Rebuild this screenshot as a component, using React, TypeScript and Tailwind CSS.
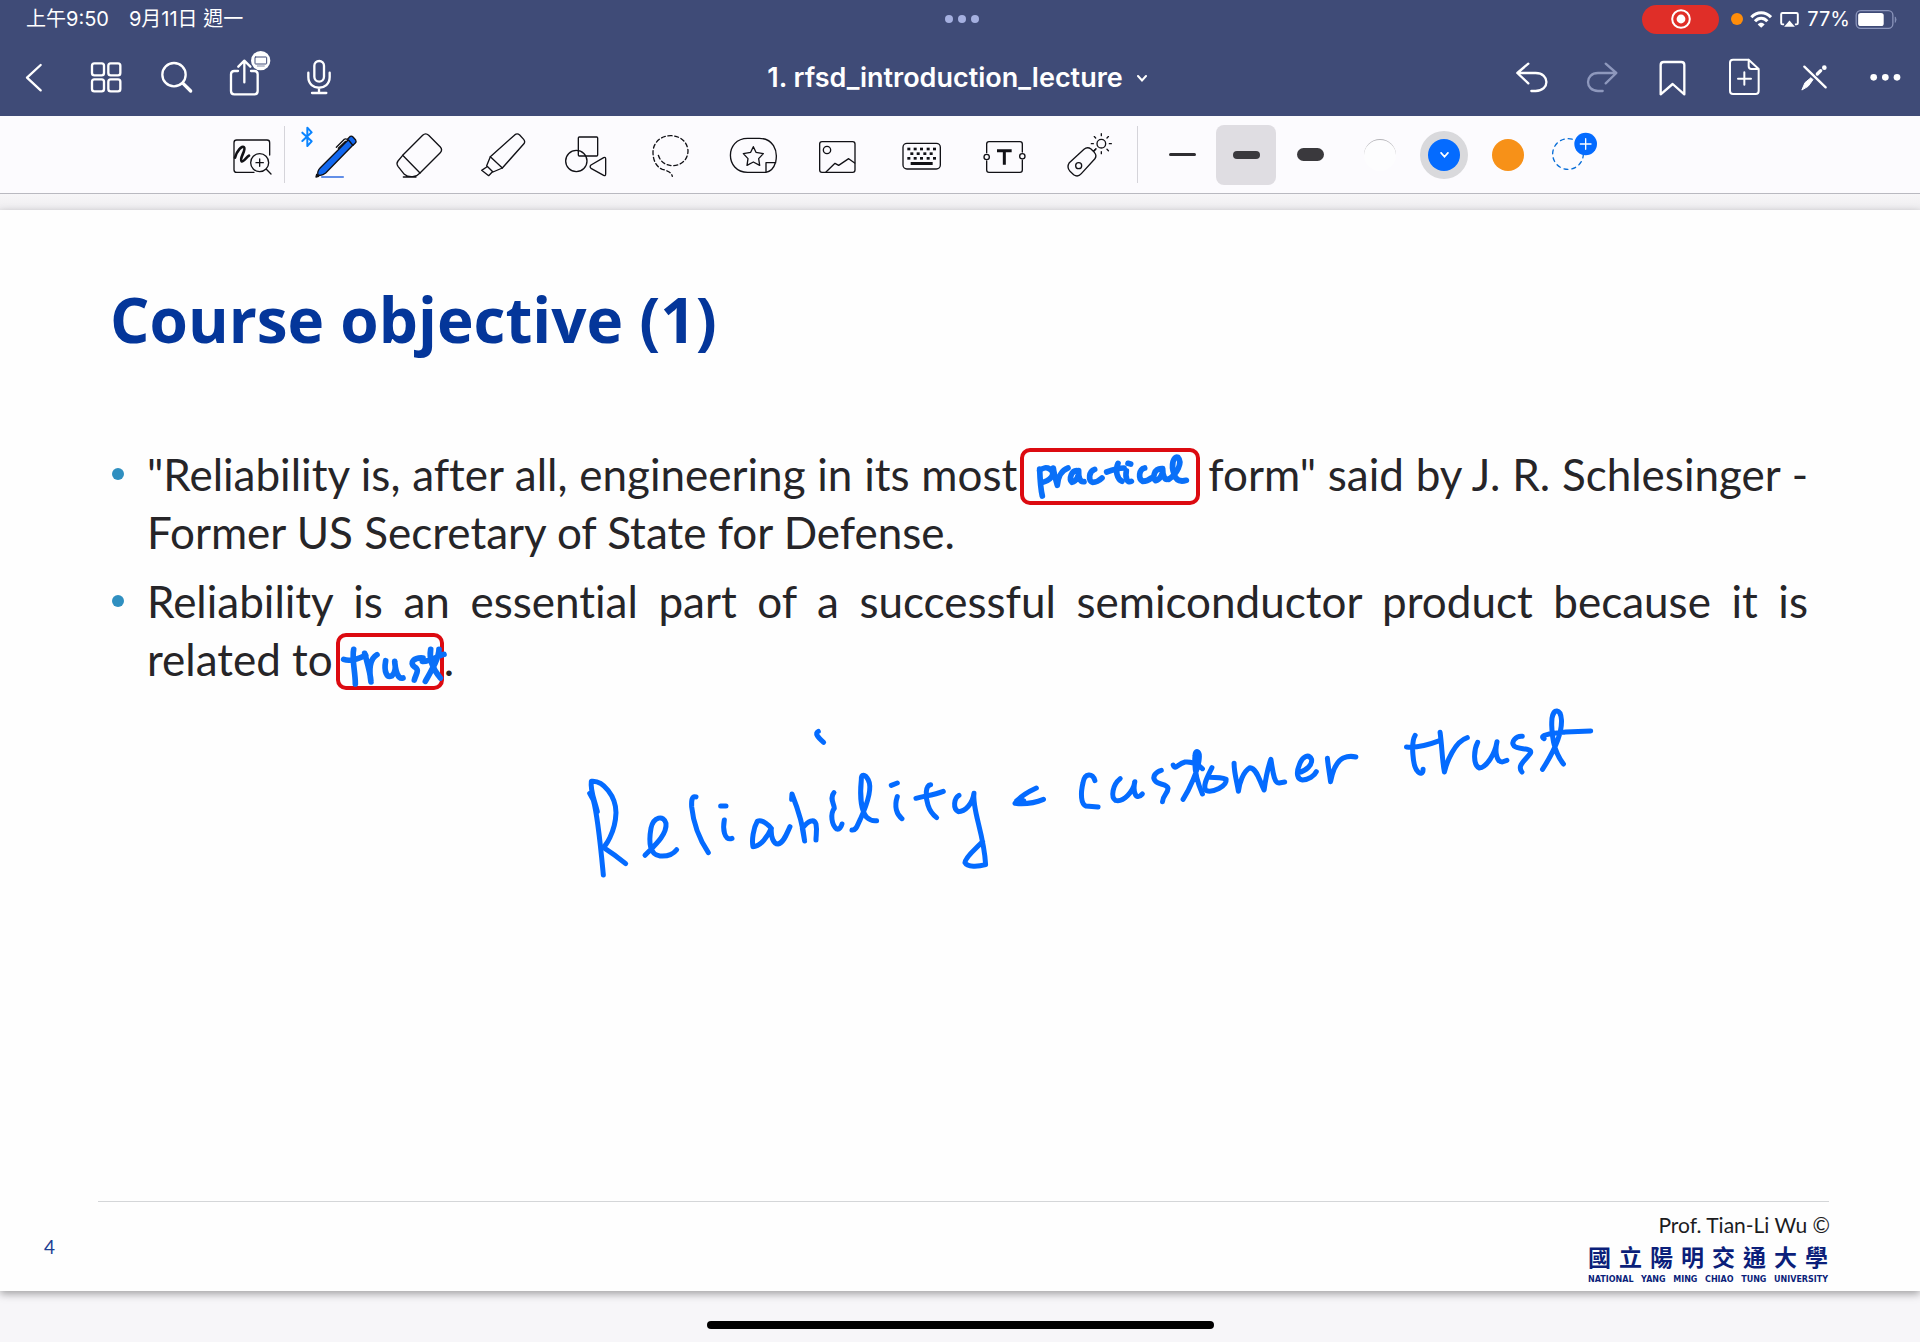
import type { ReactNode } from "react";

type IconProps = { box: string; children: ReactNode; w?: number };

/* 60px glyph drawn on a grid of three units per pixel */
function Glyph({ box, children, w = 4 }: IconProps) {
  return (
    <svg
      viewBox={box}
      className="size-[60px] shrink-0 overflow-visible"
      fill="none"
      stroke="currentColor"
      strokeWidth={w}
      strokeLinecap="round"
      strokeLinejoin="round"
      aria-hidden="true"
    >
      {children}
    </svg>
  );
}

function NavButton({ label, box, children, dim = false }: IconProps & { label: string; dim?: boolean }) {
  return (
    <button
      type="button"
      aria-label={label}
      className={dim ? "flex w-[71px] items-center justify-center text-[#8e98bd]" : "flex w-[71px] items-center justify-center text-white"}
    >
      <Glyph box={box} w={7}>
        {children}
      </Glyph>
    </button>
  );
}

function Tool({ label, box, children }: IconProps & { label: string }) {
  return (
    <button type="button" aria-label={label} className="flex w-[84px] items-center justify-center text-[#111116]">
      <Glyph box={box}>{children}</Glyph>
    </button>
  );
}

function StatusBar() {
  return (
    <div className="grid h-[38px] grid-cols-3 items-center pr-[22px] pl-[26px]">
      <div className="flex gap-5 text-[20px] leading-6">
        <span>上午9:50</span>
        <span>9月11日 週一</span>
      </div>
      <div className="flex justify-center gap-[5px]">
        <span className="size-2 rounded-full bg-[#a5b0e0]" />
        <span className="size-2 rounded-full bg-[#a5b0e0]" />
        <span className="size-2 rounded-full bg-[#a5b0e0]" />
      </div>
      <div className="flex items-center justify-end">
        <span className="mr-3 flex h-[29px] w-[77px] items-center justify-center rounded-full bg-[#e02e28]">
          <svg viewBox="0 0 20 20" className="size-5" aria-hidden="true">
            <circle cx="10" cy="10" r="8.8" fill="none" stroke="#fff" strokeWidth="2" />
            <circle cx="10" cy="10" r="4.4" fill="#fff" />
          </svg>
        </span>
        <span className="mr-[7px] size-3 rounded-full bg-[#ff8d0a]" />
        <svg viewBox="934 32 66 50" className="mr-2 h-[17px] w-[22px]" fill="none" stroke="#fff" strokeWidth="9" aria-hidden="true">
          <path d="M938 50 C955 32 980 32 997 50 M949 62 C960 50 975 50 986 62" />
          <path d="M957 72 C963 65 972 65 978 72 L967.500 82 Z" fill="#fff" stroke="none" />
        </svg>
        <svg viewBox="1024 36 57 46" className="mr-2 h-[15px] w-[19px]" fill="none" stroke="#fff" strokeWidth="6" aria-hidden="true">
          <path d="M1036 74 H1031 Q1027 74 1027 70 V43 Q1027 39 1031 39 H1074 Q1078 39 1078 43 V70 Q1078 74 1074 74 H1069" />
          <path d="M1036 81 L1052.500 62 L1069 81 Z" fill="#fff" stroke="none" />
        </svg>
        <span className="mr-[5px] text-[20px] leading-6">77%</span>
        <svg viewBox="1240 29 128 58" className="h-[19px] w-[43px]" aria-hidden="true">
          <rect x="1242" y="31" width="112" height="54" rx="14" fill="none" stroke="#8b95bb" strokeWidth="4" />
          <rect x="1248" y="38" width="78" height="40" rx="8" fill="#fff" />
          <path d="M1361 50 q6 8 0 17 z" fill="#8b95bb" stroke="#8b95bb" strokeWidth="2" />
        </svg>
      </div>
    </div>
  );
}

function NavBar() {
  return (
    <div className="grid h-[78px] grid-cols-[1fr_auto_1fr] items-center">
      <div className="flex">
        <NavButton label="Back" box="18 141 180 180">
          <path d="M122 195 L81 233 L122 271" />
        </NavButton>
        <NavButton label="Thumbnails" box="231 141 180 180">
          <rect x="276" y="190" width="36" height="36" rx="7" />
          <rect x="325" y="190" width="36" height="36" rx="7" />
          <rect x="276" y="238" width="36" height="36" rx="7" />
          <rect x="325" y="238" width="36" height="36" rx="7" />
        </NavButton>
        <NavButton label="Search" box="444 141 180 180">
          <circle cx="522" cy="224" r="35" />
          <path d="M549 250 L572 273" strokeWidth="10" />
        </NavButton>
        <NavButton label="Share" box="657 141 180 180">
          <path d="M714 213 H703 Q693 213 693 223 V273 Q693 283 703 283 H763 Q773 283 773 273 V223 Q773 213 763 213 H753 M733 247 V183 M715 200 L733 182 L751 200" />
          <circle cx="782" cy="182" r="29" fill="#fff" stroke="none" />
          <rect x="765" y="171" width="35" height="21" rx="2" stroke="#3f4b77" strokeWidth="3" />
          <path d="M772 198 H793" stroke="#3f4b77" strokeWidth="2" />
        </NavButton>
        <NavButton label="Record" box="868 141 180 180">
          <rect x="941" y="183" width="29" height="62" rx="14.500" />
          <path d="M923 218 V231 C923 274 987 274 987 231 V218 M955 264 V278 M934 279 H977" />
        </NavButton>
      </div>
      <button type="button" className="mr-[6px] flex items-center gap-[14px] pt-[2px] text-[27px] leading-8 font-semibold text-white">
        1. rfsd_introduction_lecture
        <svg viewBox="0 0 10 7" className="h-[7px] w-[10px]" fill="none" stroke="#fff" strokeWidth="2" strokeLinecap="round" aria-hidden="true">
          <path d="M1 1 L5 5.500 L9 1" />
        </svg>
      </button>
      <div className="flex justify-end">
        <NavButton label="Undo" box="180 141 180 180">
          <path d="M265 191 L232 219 L265 250 M234 219 H287 C330 219 330 273 287 273 H274" />
        </NavButton>
        <NavButton label="Redo" box="393 141 180 180" dim>
          <path d="M497 191 L529 219 L497 250 M527 219 H474 C434 219 434 273 474 273 H488" />
        </NavButton>
        <NavButton label="Bookmark" box="606 141 180 180">
          <path d="M662 283 V195 Q662 186 671 186 H724 Q733 186 733 195 V283 L698 252 Z" />
        </NavButton>
        <NavButton label="Add page" box="818 141 180 180">
          <path d="M925 179 H878 Q869 179 869 188 V273 Q869 282 878 282 H946 Q955 282 955 273 V207 L925 179 V199 Q925 207 933 207 H955 M912 217 V254 M893 236 H932" strokeWidth="6" />
        </NavButton>
        <NavButton label="Read-only mode" box="1031 141 180 180">
          <path d="M1092 200 L1156 262" />
          <path d="M1085 269 L1094 248 L1112 233 L1118 239 L1104 258 Z" fill="currentColor" strokeWidth="3" />
          <path d="M1131 222 L1141 212" strokeWidth="10" />
          <circle cx="1152" cy="203" r="7" fill="currentColor" stroke="none" />
        </NavButton>
        <NavButton label="More" box="1244 141 180 180">
          <circle cx="1300" cy="232" r="10" fill="currentColor" stroke="none" />
          <circle cx="1335" cy="232" r="10" fill="currentColor" stroke="none" />
          <circle cx="1370" cy="232" r="10" fill="currentColor" stroke="none" />
        </NavButton>
      </div>
    </div>
  );
}

const keyDots = [
  [0, 832], [0, 851], [0, 870], [0, 890], [0, 909],
  [14, 841], [14, 860], [14, 880], [14, 899],
  [28, 832], [28, 851], [28, 870], [28, 890], [28, 909],
];

const rays = [0, 45, 90, 135, 180, 225, 270, 315];

function Toolbar() {
  return (
    <div className="flex h-[78px] items-center justify-center border-b border-[#b9b9c0] bg-[#fcfbfe] pr-24">
      <button type="button" aria-label="Zoom window" className="flex w-16 items-center justify-center text-[#111116]">
        <Glyph box="6 30 180 180">
          <path d="M149 120 V83 Q149 75 141 75 H50 Q42 75 42 83 V164 Q42 172 50 172 H102" />
          <path d="M45 128 C50 108 66 90 72 97 C80 104 56 132 65 139 C70 142 80 126 87 122" strokeWidth="8" />
          <circle cx="119" cy="143" r="27" />
          <path d="M119 132 V154 M108 143 H130 M139 163 L153 177" />
        </Glyph>
      </button>
      <span className="mr-2 h-[57px] w-px bg-[#d5d4da]" />
      <div className="flex">
        <Tool label="Pen" box="252 30 180 180">
          <path d="M244 53 L272 79 L259 93 V38 L272 52 L244 78" stroke="#0a84ff" strokeWidth="6" />
          <path d="M291 180 C288 170 292 164 298 158 L382 74 L396 90 L314 174 C306 181 298 182 291 180 Z" fill="#1268f0" />
          <path d="M380 72 L388 64 Q392 62 396 66 L404 75 Q407 80 403 84 L396 91 Z" fill="#1268f0" />
          <path d="M346 97 L370 73 Q374 70 378 73 M352 100 L374 79" />
          <path d="M287 178 L285 186 L293 184 Z" fill="currentColor" />
          <path d="M302 186 H367" stroke="#2f6be0" />
        </Tool>
        <Tool label="Eraser" box="507 30 180 180">
          <path d="M548 121 L608 61 Q617 52 626 61 L661 96 Q669 105 660 114 L600 174 Z" />
          <path d="M548 121 L534 138 Q528 146 534 154 L553 178 Q562 186 578 185 L590 182 L600 174 M550 186 H588" />
        </Tool>
        <Tool label="Highlighter" box="759 30 180 180">
          <path d="M811 125 L885 59 Q892 54 899 60 L911 73 Q917 80 911 87 L847 159 Z" />
          <path d="M811 125 L800 152 L819 171 L847 159 M800 156 L785 166 L806 182 L816 172" />
        </Tool>
        <Tool label="Shapes" box="1011 30 180 180">
          <rect x="1075" y="66" width="58" height="57" rx="3" />
          <circle cx="1069" cy="138" r="32" />
          <path d="M1113 150 L1151 128 Q1157 125 1157 132 V176 Q1157 184 1151 181 L1113 160 Q1108 155 1113 150 Z" />
        </Tool>
        <Tool label="Lasso" box="33 30 180 180">
          <path d="M85 121 C92 142 108 152 130 152 C157 150 174 132 174 107 C172 80 150 62 122 62 C93 62 69 82 69 112 C69 135 78 155 97 163 C112 167 124 171 127 184" strokeDasharray="12 8" />
        </Tool>
        <Tool label="Stickers" box="285 30 180 180">
          <path d="M408 172 H353 C284 172 284 70 353 70 H388 C428 70 445 105 437 141 C432 158 420 170 408 172 V143 H437" />
          <path d="M370 95 L378 112 L400 116 L386 131 L389 151 L370 141 L351 151 L354 131 L340 116 L362 112 Z" />
        </Tool>
        <Tool label="Image" box="537 30 180 180">
          <rect x="569" y="80" width="106" height="92" rx="7" />
          <circle cx="591" cy="105" r="11" />
          <path d="M588 171 L615 145 L626 151 L656 131 L674 144" />
        </Tool>
        <Tool label="Keyboard" box="789 30 180 180">
          <rect x="819" y="85" width="112" height="77" rx="12" />
          <g fill="currentColor" stroke="none">
            {keyDots.map(([dy, x]) => (
              <rect key={`${x}-${dy}`} x={x} y={98 + dy} width="9" height="8" />
            ))}
            <rect x="842" y="141" width="66" height="9" />
          </g>
        </Tool>
        <Tool label="Text" box="1041 30 180 180">
          <path d="M1070 113 V87 Q1070 80 1077 80 H1170 Q1177 80 1177 87 V111 M1177 136 V165 Q1177 172 1170 172 H1077 Q1070 172 1070 165 V138" />
          <circle cx="1070" cy="126" r="8" />
          <circle cx="1177" cy="124" r="8" />
          <path d="M1101 107 H1145 M1123 107 V149" strokeWidth="9" strokeLinecap="butt" />
        </Tool>
        <Tool label="Laser pointer" box="1293 30 180 180">
          <path d="M1318 143 L1362 103 Q1372 94 1383 102 L1393 112 Q1402 122 1394 132 L1354 176 Q1343 188 1331 179 L1320 169 Q1309 157 1318 143 Z M1391 108 L1398 101" />
          <circle cx="1346" cy="152" r="9" />
          <circle cx="1414" cy="86" r="13" />
          {rays.map((a) => (
            <path key={a} d="M1414 62 V56" transform={`rotate(${a} 1414 86)`} />
          ))}
        </Tool>
      </div>
      <span className="mr-3 ml-1 h-[57px] w-px bg-[#d5d4da]" />
      <div className="flex items-center">
        <button type="button" aria-label="Thin stroke" className="flex h-[60px] w-16 items-center justify-center">
          <span className="h-[3px] w-[27px] rounded-full bg-[#2e2d31]" />
        </button>
        <button type="button" aria-label="Medium stroke" aria-pressed="true" className="flex h-[60px] w-16 items-center justify-center">
          <span className="flex size-[60px] items-center justify-center rounded-lg bg-[#dfdde2]">
            <span className="h-2 w-[27px] rounded-full bg-[#3a393d]" />
          </span>
        </button>
        <button type="button" aria-label="Thick stroke" className="flex h-[60px] w-16 items-center justify-center">
          <span className="h-[13px] w-[27px] rounded-full bg-[#3a393d]" />
        </button>
      </div>
      <div className="ml-[6px] flex items-center">
        <button type="button" aria-label="White" className="flex w-16 items-center justify-center">
          <span className="size-8 rounded-full border-t border-[#b5b4b8] bg-[#fdfdfe]" />
        </button>
        <button type="button" aria-label="Blue" aria-pressed="true" className="flex w-16 items-center justify-center">
          <span className="flex size-12 items-center justify-center rounded-full bg-[#d9d9dc]">
            <span className="flex size-8 items-center justify-center rounded-full bg-[#046bff]">
              <svg viewBox="0 0 10 7" className="h-[6px] w-[9px]" fill="none" stroke="#fff" strokeWidth="2" strokeLinecap="round" aria-hidden="true">
                <path d="M1 1 L5 5.500 L9 1" />
              </svg>
            </span>
          </span>
        </button>
        <button type="button" aria-label="Orange" className="flex w-16 items-center justify-center">
          <span className="size-8 rounded-full bg-[#f79118]" />
        </button>
        <button type="button" aria-label="Add colour" className="flex w-16 items-center justify-center">
          <Glyph box="1266 30 180 180">
            <circle cx="1344" cy="117" r="46" stroke="#0a6fd8" strokeDasharray="12 12" />
            <circle cx="1397" cy="87" r="34" fill="#046bff" stroke="none" />
            <path d="M1397 71 V103 M1381 87 H1413" stroke="#fff" />
          </Glyph>
        </button>
      </div>
    </div>
  );
}

function BoxedInk({ label, box, size, strokes }: { label: string; box: string; size: string; strokes: string[] }) {
  return (
    <span className={size}>
      <svg viewBox={box} className="size-full overflow-visible" role="img" aria-label={label} fill="none" stroke="#0a70f8" strokeWidth="17" strokeLinecap="round" strokeLinejoin="round">
        {strokes.map((d) => (
          <path key={d} d={d} />
        ))}
      </svg>
    </span>
  );
}

const practical = [
  "M187 115 C188 145 190 175 195 196 M187 120 C205 100 238 120 222 140 C212 152 202 154 192 156",
  "M228 112 C230 130 236 148 240 164 C242 138 254 118 272 112",
  "M302 120 C282 116 274 145 284 155 C298 152 305 135 304 120 C303 140 308 155 320 153",
  "M352 116 C334 122 332 150 346 155 C358 155 368 148 374 142",
  "M422 98 C412 120 420 145 434 152 M388 124 C404 118 424 112 440 112",
  "M447 120 C443 142 450 158 462 152 M452 98 L460 100",
  "M502 112 C484 116 482 146 496 152 C508 152 515 148 522 142",
  "M552 114 C530 114 524 142 535 150 C548 148 558 128 556 114 C556 135 562 150 574 145",
  "M574 146 C600 130 616 95 602 80 C588 74 580 105 590 130 C596 150 610 154 627 149",
];

const trust = [
  "M160 122 C154 150 165 190 165 226 M130 152 C150 160 180 148 196 140",
  "M193 134 C200 160 210 190 212 220 C205 180 210 150 230 138",
  "M256 156 C250 190 260 208 274 202 C286 192 286 172 283 158 C285 185 292 212 308 208",
  "M368 148 C340 146 326 162 342 174 C360 184 346 196 342 214",
  "M391 122 C386 150 398 182 420 208 M375 218 C392 188 416 150 416 122 M366 158 C390 160 410 142 431 137",
];

const reliability = [
  "M59 280 L70 300 C84 350 92 440 100 525",
  "M82 335 C74 300 60 272 64 244 C100 240 138 290 138 338 C136 400 104 440 100 442 C125 458 148 475 167 491",
  "M225 466 C250 440 292 405 288 370 C282 344 250 350 243 385 C235 430 240 465 270 468 C295 470 310 462 320 449",
  "M378 291 C366 287 364 300 365 320 C370 370 390 420 415 458",
  "M463 360 C458 385 462 424 486 415 M452 318 L468 318",
  "M604 385 C594 374 575 358 562 364 C550 385 545 420 549 440 C572 440 594 408 604 385 C602 410 610 432 624 432 C640 430 650 402 660 380",
  "M665 298 L666 282 C685 330 700 380 704 423 L697 385 C715 362 732 355 738 372 C742 392 738 404 738 420",
  "M792 278 C778 294 792 310 793 325 C780 342 785 375 800 387 C808 390 814 380 816 372",
  "M846 390 C860 392 862 375 870 360 C892 312 908 265 895 240 C885 220 873 222 874 240 C870 280 872 330 890 352 C900 362 910 363 920 362",
  "M982 290 C972 320 980 344 996 356 M964 256 L982 249",
  "M1082 254 C1066 256 1066 290 1074 315 C1080 335 1090 345 1100 353 M1038 295 C1065 288 1095 284 1120 274",
  "M1167 286 C1152 295 1148 325 1165 335 C1185 335 1208 312 1212 280 C1206 330 1242 400 1247 494 C1225 500 1192 502 1185 488 C1186 470 1220 445 1238 424",
  "M745 94 C734 100 742 110 761 127",
];

const customerTrust = [
  "M92 294 C70 306 48 322 38 340 C65 343 90 338 110 328 M42 332 L60 332",
  "M240 272 C235 248 214 248 210 278 C203 312 205 342 217 348 L248 351",
  "M304 266 C284 285 280 322 292 331 C312 338 338 304 341 275 C336 300 342 336 360 312",
  "M408 241 C394 245 384 260 392 272 C400 286 422 280 425 295 C425 310 412 315 411 335",
  "M438 225 C444 242 448 222 468 216 C488 214 500 222 512 236 M463 328 C478 300 502 240 504 205 C506 180 493 178 493 198 C490 240 500 280 512 312 M499 190 L497 230",
  "M536 233 C526 258 510 290 522 302 C538 308 574 290 572 268 C560 262 540 262 530 262",
  "M592 220 C592 250 600 280 603 304 C605 280 615 245 632 233 C650 235 655 270 668 300 C672 265 677 235 685 208 C690 240 692 280 706 279 L720 276",
  "M755 248 C775 242 790 225 788 208 C780 190 764 200 757 225 C748 250 752 268 765 270 C780 270 795 258 800 245",
  "M828 205 C830 230 834 255 836 275 C840 250 850 215 868 204 C880 198 890 198 900 201",
  "M1050 136 C1038 160 1045 230 1055 242 C1062 254 1070 252 1070 238 M1028 171 C1060 175 1090 162 1112 152",
  "M1113 127 C1118 170 1118 210 1124 246 C1130 215 1150 155 1182 143",
  "M1208 157 C1198 180 1196 225 1212 234 C1232 232 1252 190 1257 155 C1250 190 1258 216 1270 216 L1282 211",
  "M1321 139 C1305 137 1291 155 1300 168 C1310 180 1345 172 1342 188 C1335 205 1305 225 1320 246",
  "M1372 238 C1390 205 1422 140 1420 90 C1418 55 1400 55 1396 85 C1393 130 1400 185 1425 222 M1376 146 C1360 134 1400 130 1430 126 L1494 123",
];

function InkNote() {
  return (
    <svg
      viewBox="570 700 1050 190"
      className="mt-3 ml-[570px] h-[190px] w-[1050px] overflow-visible"
      role="img"
      aria-label="Reliability = customer trust"
      fill="none"
      stroke="#046bff"
      strokeWidth="5"
      strokeLinecap="round"
      strokeLinejoin="round"
    >
      <g transform="translate(570 700) scale(0.3333)">
        {reliability.map((d) => (
          <path key={d} d={d} vectorEffect="non-scaling-stroke" />
        ))}
      </g>
      <g transform="translate(1000 690) scale(0.3954 0.3333)">
        {customerTrust.map((d) => (
          <path key={d} d={d} vectorEffect="non-scaling-stroke" />
        ))}
      </g>
    </svg>
  );
}

function Slide() {
  return (
    <main className="flex flex-1 flex-col bg-[#fefefe] font-[Lato,'Noto_Sans_CJK_TC',sans-serif] shadow-[0_3px_8px_rgba(0,0,0,0.35)] [font-variant-ligatures:none]">
      <h1 className="mt-[73px] ml-[110px] font-['Open_Sans',sans-serif] text-[62px] leading-[72px] font-bold text-[#04369a]">Course objective (1)</h1>
      <ul className="mt-[90px] mr-28 ml-28 flex flex-col gap-[11px] text-[44px] leading-[58px] text-[#262528]">
        <li className="flex">
          <span className="mt-[23px] mr-[23px] size-3 shrink-0 rounded-full bg-[#2f8fc0]" />
          <p className="flex-1">
            <span className="block whitespace-nowrap [text-align-last:justify]">
              "Reliability is, after all, engineering in its most
              <BoxedInk
                label="practical"
                box="140 64 516 147"
                size="mr-2 ml-[3px] -mt-[10px] -mb-1 inline-block h-[57px] w-[180px] rounded-[10px] border-4 border-[#dc0a10] align-middle"
                strokes={practical}
              />
              form" said by J. R. Schlesinger -
            </span>
            <span className="block whitespace-nowrap">Former US Secretary of State for Defense.</span>
          </p>
        </li>
        <li className="flex">
          <span className="mt-[23px] mr-[23px] size-3 shrink-0 rounded-full bg-[#2f8fc0]" />
          <p className="flex-1">
            <span className="block whitespace-nowrap [text-align-last:justify]">
              Reliability is an essential part of a successful semiconductor product because it is
            </span>
            <span className="block whitespace-nowrap">
              related to
              <BoxedInk
                label="trust"
                box="119 85 300 147"
                size="ml-[3px] -mt-[10px] -mb-1 inline-block h-[57px] w-[108px] rounded-[10px] border-4 border-[#dc0a10] align-middle"
                strokes={trust}
              />
              .
            </span>
          </p>
        </li>
      </ul>
      <InkNote />
      <footer className="mt-auto">
        <hr className="mr-[91px] ml-[98px] border-[#d4d6d8]" />
        <div className="flex items-start justify-between pt-[11px] pr-[90px] pb-[6px] pl-11">
          <span className="mt-[22px] text-[19px] leading-6 text-[#1c3f94]">4</span>
          <div className="flex flex-col items-end">
            <span className="text-[21px] leading-6 text-[#1c1c1e]">Prof. Tian-Li Wu ©</span>
            <div className="mr-[2px] w-[240px] text-[#0b1f7a]">
              <p className="font-['Noto_Sans_CJK_TC',sans-serif] text-[23px] leading-[38px] font-bold [text-align-last:justify]">國立陽明交通大學</p>
              <p className="font-['DejaVu_Sans',sans-serif] text-[8px] leading-[10px] font-bold [text-align-last:justify]">NATIONAL YANG MING CHIAO TUNG UNIVERSITY</p>
            </div>
          </div>
        </div>
      </footer>
    </main>
  );
}

export default function App() {
  return (
    <div className="flex min-h-screen flex-col bg-[#f7f6f9] font-[Inter,'Noto_Sans_CJK_TC',sans-serif]">
      <header className="bg-[#3f4b77] text-white">
        <StatusBar />
        <NavBar />
      </header>
      <Toolbar />
      <div className="h-4 bg-gradient-to-b from-[#f7f6f8] to-[#eeedf0]" />
      <Slide />
      <div className="flex h-[51px] justify-center pt-[30px]">
        <span className="h-2 w-[507px] rounded-full bg-black" />
      </div>
    </div>
  );
}
